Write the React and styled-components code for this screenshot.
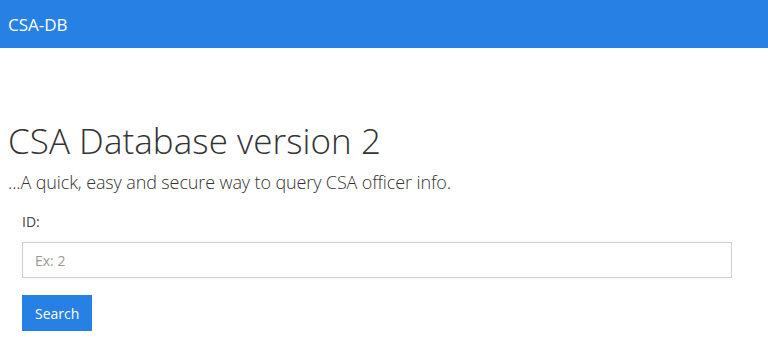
import React from 'react'
import styled, { createGlobalStyle } from 'styled-components';

const GlobalStyle = createGlobalStyle`
  body {
    margin: 0;
    font-family: "Open Sans", "Noto Sans", sans-serif;
    background: #fff;
    color: #333;
  }
`;

function App() {
  return (
    <>
      <GlobalStyle />
      <Navbar>
        <Brand>CSA-DB</Brand>
      </Navbar>
      <Main>
        <Title>CSA Database version 2</Title>
        <Lead>...A quick, easy and secure way to query CSA officer info.</Lead>
        <Form onSubmit={(e) => e.preventDefault()}>
          <Label htmlFor="id">ID:</Label>
          <Input id="id" type="text" placeholder="Ex: 2" />
          <Button type="submit">Search</Button>
        </Form>
      </Main>
    </>
  );
}

export default App;

const Navbar = styled.div`
  height: 48px;
  background: #2780e3;
  display: flex;
  align-items: center;
  padding: 0 8px;
`;

const Brand = styled.span`
  color: #fff;
  font-size: 17px;
`;

const Main = styled.div`
  padding: 70px 8px 0;
`;

const Title = styled.h1`
  margin: 0 0 4px;
  font-size: 35px;
  font-weight: 300;
  line-height: 46px;
  letter-spacing: 0.05px;
  color: #333;
`;

const Lead = styled.p`
  margin: 0;
  font-size: 18px;
  font-weight: 300;
  line-height: 28px;
  letter-spacing: -0.12px;
  color: #333;
`;

const Form = styled.form`
  padding: 16px 28px 0 14px;
  display: flex;
  flex-direction: column;
  align-items: flex-start;
`;

const Label = styled.label`
  font-size: 14px;
  color: #444;
  line-height: 20px;
  margin-bottom: 10px;
`;

const Input = styled.input`
  box-sizing: border-box;
  width: 100%;
  height: 36px;
  border: 1px solid #ccd0d6;
  border-radius: 0;
  padding: 0 12px;
  font-family: inherit;
  font-size: 14px;
  color: #333;
  outline: none;
  &::placeholder {
    color: #999;
  }
`;

const Button = styled.button`
  margin-top: 17px;
  height: 36px;
  padding: 0 13px;
  border: none;
  border-radius: 0;
  background: #2780e3;
  color: #fff;
  font-family: inherit;
  font-size: 14px;
  cursor: pointer;
`;
